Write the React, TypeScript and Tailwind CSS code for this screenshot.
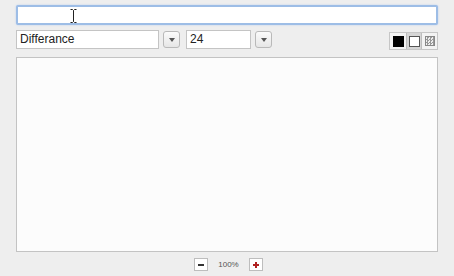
import React from "react";

function DropBtn() {
  return (
    <div className="w-[17px] h-[17px] mt-[1px] rounded-[3px] border border-[#b9b9b9] bg-gradient-to-b from-[#fbfbfb] to-[#e6e6e6] flex items-center justify-center">
      <svg width="6" height="4" viewBox="0 0 6 4">
        <path d="M0 0 L6 0 L3 4 Z" fill="#555" />
      </svg>
    </div>
  );
}

export default function App() {
  return (
    <div className="w-[454px] h-[276px] bg-[#eeeeee] relative overflow-hidden" style={{ fontFamily: '"Liberation Sans", Arial, sans-serif' }}>
      <div className="flex flex-col px-[16px] pt-[5px]">
        {/* search field */}
        <div className="h-[20px] rounded-[2px] border-2 border-[#9dbde6] bg-white shadow-[0_0_2px_#b7cff0]" />

        {/* second row */}
        <div className="flex items-start mt-[5px] h-[19px]">
          <div className="w-[143px] h-[19px] border border-[#c4c4c4] bg-white text-[12px] text-[#222] leading-[17px] pl-[3px]">Differance</div>
          <div className="ml-[4px]"><DropBtn /></div>
          <div className="ml-[6px] w-[65px] h-[19px] border border-[#c4c4c4] bg-white text-[12px] text-[#222] leading-[17px] pl-[3px]">24</div>
          <div className="ml-[4px]"><DropBtn /></div>
          <div className="ml-auto mt-[2px] flex h-[18px] border border-[#c6c6c6] bg-[#f3f3f3]">
            <div className="w-[16px] h-full flex items-center justify-center">
              <div className="w-[11px] h-[11px] bg-black" />
            </div>
            <div className="w-[16px] h-full flex items-center justify-center bg-[#d5d5d5] border-x border-[#bdbdbd]">
              <div className="w-[11px] h-[11px] bg-white border border-[#555]" />
            </div>
            <div className="w-[15px] h-full flex items-center justify-center">
              <div className="w-[10px] h-[10px] border border-[#888] bg-[repeating-conic-gradient(#999_0_25%,#eee_0_50%)] bg-[length:3px_3px]" />
            </div>
          </div>
        </div>

        {/* canvas */}
        <div className="mt-[8px] h-[195px] border border-[#c3c3c3] bg-[#fcfcfc]" />

        {/* zoom controls */}
        <div className="flex items-center justify-center mt-[6px] h-[13px] pl-[3px]">
          <div className="w-[14px] h-[13px] border border-[#bdbdbd] bg-white flex items-center justify-center">
            <div className="w-[6px] h-[2px] bg-[#333]" />
          </div>
          <span className="mx-[10px] text-[8px] text-[#555] leading-none">100%</span>
          <div className="w-[14px] h-[13px] border border-[#bdbdbd] bg-white flex items-center justify-center relative">
            <div className="absolute w-[6px] h-[2px] bg-[#b02020]" />
            <div className="absolute w-[2px] h-[6px] bg-[#b02020]" />
          </div>
        </div>
      </div>

      {/* mouse I-beam cursor */}
      <svg className="absolute left-[70px] top-[9px]" width="7" height="14" viewBox="0 0 7 14">
        <path d="M0.5 0.5 H2.5 L3.5 1.5 L4.5 0.5 H6.5 M3.5 1.5 V12.5 M0.5 13.5 H2.5 L3.5 12.5 L4.5 13.5 H6.5" stroke="#222" strokeWidth="1" fill="none" />
      </svg>
    </div>
  );
}
